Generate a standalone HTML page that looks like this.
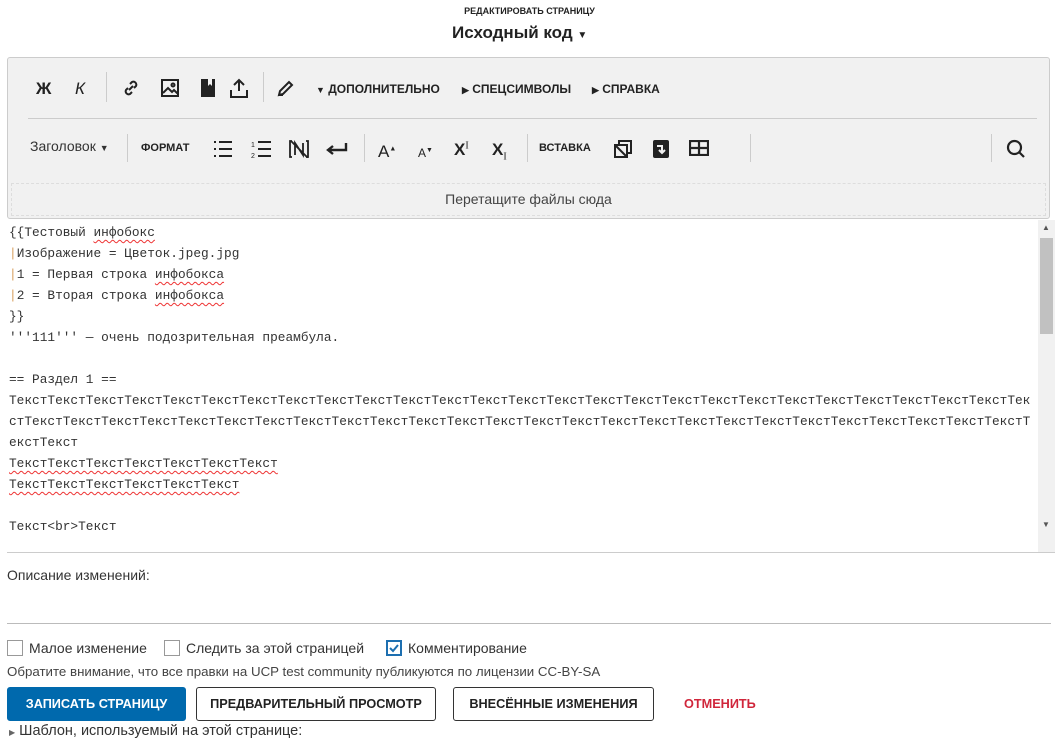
<!DOCTYPE html>
<html><head><meta charset="utf-8"><style>
*{box-sizing:border-box}
body{margin:0;width:1059px;height:752px;background:#fff;font-family:"Liberation Sans",sans-serif;color:#222;position:relative;overflow:hidden}
.abs{position:absolute}
.b{font-weight:bold}
.tb{left:7px;top:57px;width:1043px;height:162px;background:#f1f1f1;border:1px solid #ccc;border-radius:3px}
.sep{position:absolute;width:1px;background:#ccc}
.lbl{position:absolute;font-size:12px;font-weight:bold;color:#222}
.ic{position:absolute}
.code{left:7px;top:220px;width:1048px;height:333px;border-bottom:1px solid #ccc}
.code pre{margin:0;position:absolute;left:2px;top:2px;font-family:"Liberation Mono",monospace;font-size:12.8px;line-height:21px;color:#333}
.sq{text-decoration:underline wavy #e33;text-decoration-thickness:1px;text-underline-offset:3px}
.p{color:#d8a060}
.cb{position:absolute;width:16px;height:16px;border:1px solid #999;background:#fff}
.btn{position:absolute;top:687px;height:34px;border:1px solid #333;border-radius:3px;font-size:12.7px;font-weight:bold;text-align:center;line-height:32px;background:#fff}
</style></head><body>
<div class="abs" style="left:0;width:1059px;top:6px;text-align:center;font-size:9px;font-weight:bold">РЕДАКТИРОВАТЬ СТРАНИЦУ</div>
<div class="abs" style="left:452px;top:23px;font-size:17px;font-weight:bold">Исходный код <span style="font-size:10px">▼</span></div>

<div class="abs tb">
 <div class="abs b" style="left:28px;top:21px;font-size:17px">Ж</div>
 <div class="abs" style="left:67px;top:21px;font-size:17px;font-style:italic">К</div>
 <div class="sep" style="left:98px;top:14px;height:30px"></div>
 <svg class="ic" style="left:113px;top:20px" width="20" height="20" viewBox="0 0 20 20" fill="none" stroke="#222" stroke-width="2"><path d="M8 12l4-4M9 6l2-2a3 3 0 014 4l-2 2M11 14l-2 2a3 3 0 01-4-4l2-2"/></svg>
 <svg class="ic" style="left:152px;top:20px" width="20" height="20" viewBox="0 0 20 20" fill="none" stroke="#222" stroke-width="2"><rect x="2" y="2" width="16" height="16"/><path d="M3 15l5-5 4 4 2-2 4 4"/><circle cx="13" cy="7" r="1.5"/></svg>
 <svg class="ic" style="left:192px;top:20px" width="16" height="20" viewBox="0 0 16 20"><path d="M1 1h14v18H1z" fill="#222"/><path d="M8 1v7l2-2 2 2V1" fill="#f1f1f1"/></svg>
 <svg class="ic" style="left:221px;top:19px" width="20" height="22" viewBox="0 0 20 22" fill="none" stroke="#222" stroke-width="2"><path d="M10 14V3M5 8l5-5 5 5M2 13v7h16v-7"/></svg>
 <div class="sep" style="left:255px;top:14px;height:30px"></div>
 <svg class="ic" style="left:268px;top:21px" width="20" height="18" viewBox="0 0 20 18" fill="none" stroke="#222" stroke-width="2"><path d="M3 16l1-4 9-9 3 3-9 9zM3 16h4"/></svg>
 <div class="lbl" style="left:308px;top:24px"><span style="font-size:9px">▼</span> ДОПОЛНИТЕЛЬНО</div>
 <div class="lbl" style="left:454px;top:24px"><span style="font-size:9px">▶</span> СПЕЦСИМВОЛЫ</div>
 <div class="lbl" style="left:584px;top:24px"><span style="font-size:9px">▶</span> СПРАВКА</div>
 <div class="abs" style="left:20px;top:60px;width:1009px;height:1px;background:#ccc"></div>
 <div class="abs" style="left:22px;top:80px;font-size:14px;color:#333">Заголовок <span style="font-size:9px">▼</span></div>
 <div class="sep" style="left:119px;top:76px;height:28px"></div>
 <div class="lbl" style="left:133px;top:84px;font-size:11px">ФОРМАТ</div>
 <svg class="ic" style="left:205px;top:82px" width="20" height="18" viewBox="0 0 20 18" stroke="#222" stroke-width="2"><path d="M6 2h13M6 9h13M6 16h13M1 2h2M1 9h2M1 16h2"/></svg>
 <svg class="ic" style="left:243px;top:82px" width="20" height="18" viewBox="0 0 20 18" stroke="#222" stroke-width="2"><path d="M7 2h13M7 9h13M7 16h13"/><text x="0" y="7" font-size="7" stroke="none" fill="#222">1</text><text x="0" y="18" font-size="7" stroke="none" fill="#222">2</text></svg>
 <svg class="ic" style="left:281px;top:82px" width="20" height="18" viewBox="0 0 20 18" fill="none" stroke="#222" stroke-width="1.8"><path d="M3 1H1v16h2M17 1h2v16h-2M6 15V3l8 12V3M2 1l17 17"/></svg>
 <svg class="ic" style="left:318px;top:84px" width="22" height="14" viewBox="0 0 22 14" fill="none" stroke="#222" stroke-width="2.4"><path d="M20 1v7H3M7 4L2 8l5 4"/></svg>
 <div class="sep" style="left:356px;top:76px;height:28px"></div>
 <div class="abs b" style="left:370px;top:84px;font-size:17px;font-weight:normal">A<sup style="font-size:7px">▲</sup></div>
 <div class="abs" style="left:410px;top:88px;font-size:12px">A<sup style="font-size:7px">▼</sup></div>
 <div class="abs b" style="left:446px;top:82px;font-size:17px">X<sup style="font-size:10px;font-weight:normal;font-family:'Liberation Serif'">I</sup></div>
 <div class="abs b" style="left:484px;top:82px;font-size:17px">X<sub style="font-size:10px;font-weight:normal;font-family:'Liberation Serif'">I</sub></div>
 <div class="sep" style="left:519px;top:76px;height:28px"></div>
 <div class="lbl" style="left:531px;top:84px;font-size:11px">ВСТАВКА</div>
 <svg class="ic" style="left:606px;top:82px" width="18" height="18" viewBox="0 0 18 18" fill="none" stroke="#222" stroke-width="2"><path d="M5 4V1h12v12h-3M1 5h12v12H1zM2 6l10 10"/></svg>
 <svg class="ic" style="left:644px;top:81px" width="18" height="20" viewBox="0 0 18 20"><rect x="1" y="1" width="16" height="18" rx="2" fill="#222"/><path d="M5 7h5v6M7 11l3 3 3-3" stroke="#f1f1f1" stroke-width="2" fill="none"/></svg>
 <svg class="ic" style="left:681px;top:82px" width="20" height="16" viewBox="0 0 20 16" fill="none" stroke="#222" stroke-width="2.2"><rect x="1" y="1" width="18" height="14"/><path d="M1 8h18M10 1v14"/></svg>
 <div class="sep" style="left:742px;top:76px;height:28px"></div>
 <div class="sep" style="left:983px;top:76px;height:28px"></div>
 <svg class="ic" style="left:998px;top:81px" width="20" height="20" viewBox="0 0 20 20" fill="none" stroke="#222" stroke-width="2.2"><circle cx="8.5" cy="8.5" r="6.5"/><path d="M13 13l5 5"/></svg>
 <div class="abs" style="left:3px;top:125px;width:1035px;height:33px;border:1px dashed #ddd;text-align:center;font-size:14px;line-height:31px;color:#444">Перетащите файлы сюда</div>
</div>

<div class="abs code">
<pre>{{Тестовый <span class="sq">инфобокс</span>
<span class="p">|</span>Изображение = Цветок.jpeg.jpg
<span class="p">|</span>1 = Первая строка <span class="sq">инфобокса</span>
<span class="p">|</span>2 = Вторая строка <span class="sq">инфобокса</span>
}}
'''111''' — очень подозрительная преамбула.

== Раздел 1 ==
ТекстТекстТекстТекстТекстТекстТекстТекстТекстТекстТекстТекстТекстТекстТекстТекстТекстТекстТекстТекстТекстТекстТекстТекстТекстТекстТек
стТекстТекстТекстТекстТекстТекстТекстТекстТекстТекстТекстТекстТекстТекстТекстТекстТекстТекстТекстТекстТекстТекстТекстТекстТекстТекстТ
екстТекст
<span class="sq">ТекстТекстТекстТекстТекстТекстТекст</span>
<span class="sq">ТекстТекстТекстТекстТекстТекст</span>

Текст&lt;br&gt;Текст</pre>
 <div class="abs" style="left:1031px;top:0;width:17px;height:332px;background:#f1f1f1"></div>
 <div class="abs" style="left:1033px;top:18px;width:13px;height:96px;background:#c1c1c1"></div>
 <div class="abs" style="left:1035px;top:3px;font-size:8px;color:#555">▲</div>
 <div class="abs" style="left:1035px;top:300px;font-size:8px;color:#555">▼</div>
</div>

<div class="abs" style="left:7px;top:567px;font-size:14px;color:#333">Описание изменений:</div>
<div class="abs" style="left:7px;top:623px;width:1044px;height:1px;background:#bbb"></div>

<div class="cb" style="left:7px;top:640px"></div>
<div class="abs" style="left:29px;top:640px;font-size:14px;color:#333">Малое изменение</div>
<div class="cb" style="left:164px;top:640px"></div>
<div class="abs" style="left:186px;top:640px;font-size:14px;color:#333">Следить за этой страницей</div>
<div class="cb" style="left:386px;top:640px;border:2px solid #1d6fb0"><svg width="12" height="12" viewBox="0 0 12 12" style="position:absolute;left:0;top:0"><path d="M2 6l3 3 5-6" stroke="#1d6fb0" stroke-width="2" fill="none"/></svg></div>
<div class="abs" style="left:408px;top:640px;font-size:14px;color:#333">Комментирование</div>
<div class="abs" style="left:7px;top:664px;font-size:13.3px;color:#444">Обратите внимание, что все правки на UCP test community публикуются по лицензии CC-BY-SA</div>

<div class="btn" style="left:7px;width:179px;background:#0069ad;border-color:#0069ad;color:#fff">ЗАПИСАТЬ СТРАНИЦУ</div>
<div class="btn" style="left:196px;width:240px">ПРЕДВАРИТЕЛЬНЫЙ ПРОСМОТР</div>
<div class="btn" style="left:453px;width:201px">ВНЕСЁННЫЕ ИЗМЕНЕНИЯ</div>
<div class="abs b" style="left:684px;top:697px;font-size:12.7px;color:#d0263b">ОТМЕНИТЬ</div>
<div class="abs" style="left:9px;top:723px;font-size:14.5px;color:#333"><span style="font-size:8px;color:#666">▶</span> Шаблон, используемый на этой странице:</div>
</body></html>
